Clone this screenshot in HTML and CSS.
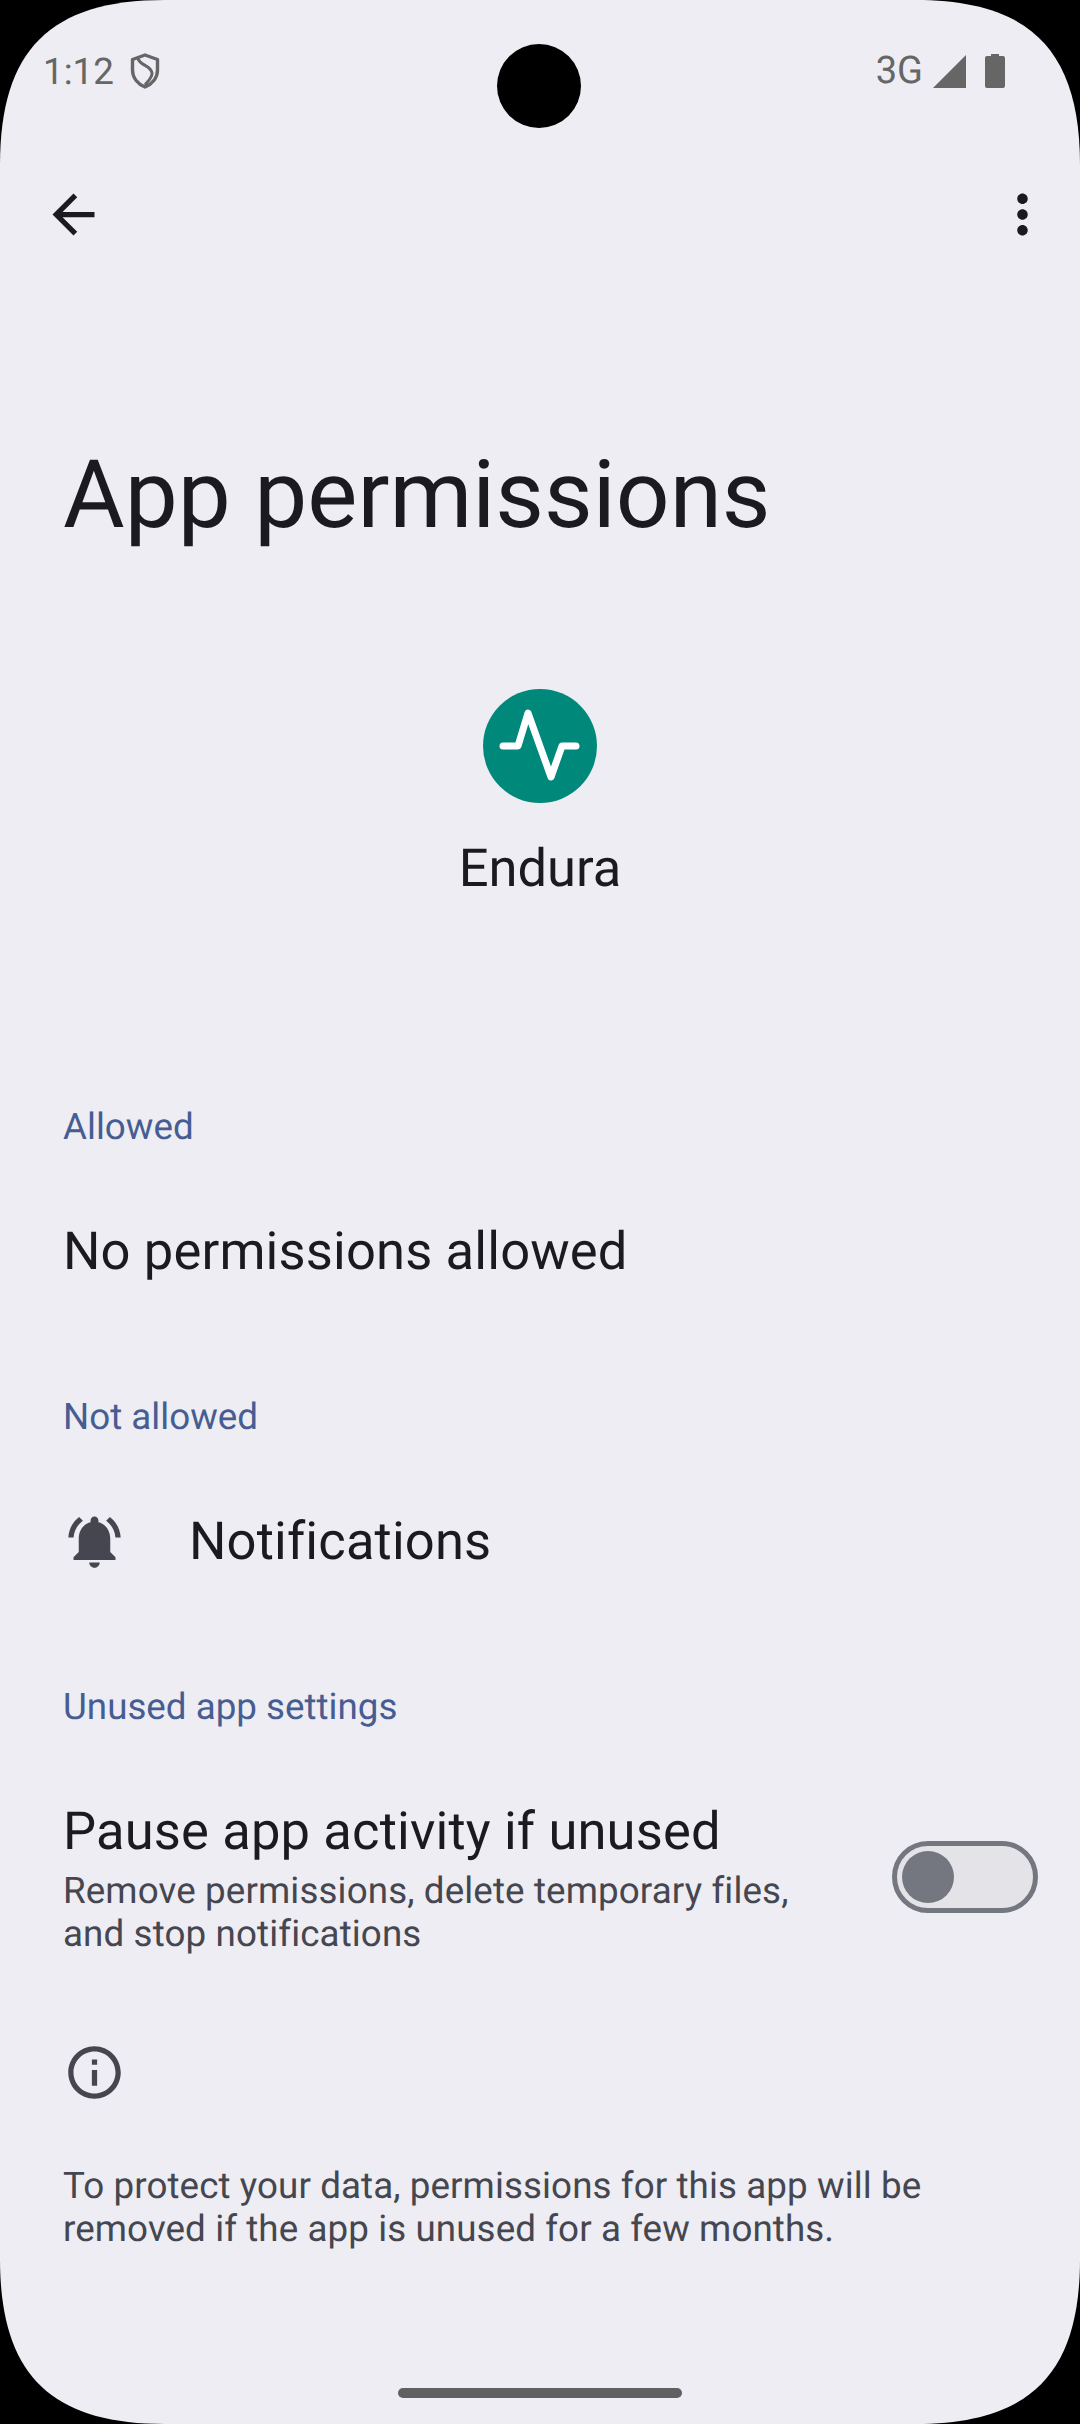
FILE: index.html
```html
<!DOCTYPE html>
<html lang="en">
<head>
  <meta charset="UTF-8" />
  <title>App permissions</title>
  <link rel="stylesheet" href="styles.css">
</head>
<body>
  <div class="screen">
    <div class="status-bar">
      <div class="status-left">
        <span class="clock">1:12</span>
        <svg class="shield" viewBox="0 0 30 36"><path d="M15 2 L27.5 6.5 V17 C27.5 25 22 31 15 34 C8 31 2.5 25 2.5 17 V6.5 Z" fill="none" stroke="#666" stroke-width="3.4" stroke-linejoin="round"/><path d="M8 5.5 C10 13 21 12 22 20 C22.5 24 19 27 15 32" fill="none" stroke="#666" stroke-width="3"/></svg>
      </div>
      <div class="status-right">
        <span class="network">3G</span>
        <svg class="signal" viewBox="0 0 33 33"><path d="M33 0 V33 H0 Z" fill="#666"/></svg>
        <svg class="battery" viewBox="0 0 20 34"><path d="M6 0 H14 V2 H18 Q20 2 20 4 V32 Q20 34 18 34 H2 Q0 34 0 32 V4 Q0 2 2 2 H6 Z" fill="#666"/></svg>
      </div>
    </div>
    <div class="camera"></div>

    <div class="toolbar">
      <svg class="icon" viewBox="0 0 24 24"><path d="M20 11H7.83l5.59-5.59L12 4l-8 8 8 8 1.41-1.41L7.83 13H20v-2z" fill="#1b1b1f"/></svg>
      <svg class="icon" viewBox="0 0 24 24"><path d="M12 8c1.1 0 2-.9 2-2s-.9-2-2-2-2 .9-2 2 .9 2 2 2zm0 2c-1.1 0-2 .9-2 2s.9 2 2 2 2-.9 2-2-.9-2-2-2zm0 6c-1.1 0-2 .9-2 2s.9 2 2 2 2-.9 2-2-.9-2-2-2z" fill="#1b1b1f"/></svg>
    </div>

    <h1 class="page-title">App permissions</h1>

    <div class="app-header">
      <svg class="app-icon" viewBox="0 0 114 114">
        <circle cx="57" cy="57" r="57" fill="#00897b"/>
        <path d="M20 57 H35 L45 24 L68 88 L79 57 H93" fill="none" stroke="#fff" stroke-width="7" stroke-linecap="round" stroke-linejoin="round"/>
      </svg>
      <div class="app-name">Endura</div>
    </div>

    <section class="group group-first">
      <div class="group-label">Allowed</div>
      <div class="row"><span class="row-title">No permissions allowed</span></div>
    </section>

    <section class="group">
      <div class="group-label">Not allowed</div>
      <div class="row">
        <svg class="icon row-icon" viewBox="0 0 24 24"><path d="M7.58 4.08L6.15 2.65C3.75 4.48 2.17 7.3 2.03 10.5h2c.15-2.65 1.51-4.97 3.55-6.42zm12.39 6.42h2c-.15-3.2-1.73-6.02-4.12-7.85l-1.42 1.43c2.02 1.45 3.39 3.77 3.54 6.42zM18 11c0-3.07-1.64-5.64-4.5-6.32V4c0-.83-.67-1.5-1.5-1.5s-1.5.67-1.5 1.5v.68C7.63 5.36 6 7.92 6 11v5l-2 2v1h16v-1l-2-2v-5zm-6 11c.14 0 .27-.01.4-.04.65-.14 1.18-.58 1.44-1.18.1-.24.15-.5.15-.78h-4c.01 1.1.9 2 2.01 2z" fill="#45464f"/></svg>
        <span class="row-title">Notifications</span>
      </div>
    </section>

    <section class="group">
      <div class="group-label">Unused app settings</div>
      <div class="toggle-row">
        <div class="toggle-text">
          <div class="row-title">Pause app activity if unused</div>
          <div class="row-summary">Remove permissions, delete temporary files, and stop notifications</div>
        </div>
        <div class="switch"><div class="switch-thumb"></div></div>
      </div>
    </section>

    <div class="footer-info">
      <svg class="icon" viewBox="0 0 24 24"><path d="M11 7h2v2h-2zm0 4h2v6h-2zm1-9C6.48 2 2 6.48 2 12s4.48 10 10 10 10-4.48 10-10S17.52 2 12 2zm0 18c-4.41 0-8-3.59-8-8s3.59-8 8-8 8 3.59 8 8-3.59 8-8 8z" fill="#45464f"/></svg>
      <p class="footer-text">To protect your data, permissions for this app will be removed if the app is unused for a few months.</p>
    </div>

    <div class="nav-pill"></div>
  </div>
</body>
</html>
```

FILE: styles.css
```css
body {
  margin: 0;
  background: #000;
  font-family: Roboto, sans-serif;
  text-rendering: geometricPrecision;
}
.screen {
  position: relative;
  box-sizing: border-box;
  width: 1080px;
  height: 2424px;
  overflow: hidden;
  background: #ededf3;
  clip-path: path("M0,165 C0,50 50,0 165,0 H915 C1030,0 1080,50 1080,165 V2259 C1080,2374 1030,2424 915,2424 H165 C50,2424 0,2374 0,2259 Z");
  color: #1b1b1f;
}
.status-bar {
  display: flex;
  justify-content: space-between;
  align-items: center;
  height: 36px;
  padding: 53px 75px 0 43px;
  color: #666;
  font-size: 36.75px;
}
.status-left, .status-right {
  display: flex;
  align-items: center;
}
.shield {
  width: 30px;
  height: 36px;
  margin-left: 16px;
}
.network {
  font-size: 38px;
}
.signal {
  width: 33px;
  height: 33px;
  margin-left: 10px;
}
.battery {
  width: 20px;
  height: 34px;
  margin-left: 19px;
}
.camera {
  position: absolute;
  left: 497px;
  top: 44px;
  width: 84px;
  height: 84px;
  border-radius: 50%;
  background: #000;
}
.toolbar {
  display: flex;
  justify-content: space-between;
  padding: 94px 26px 0 42px;
}
.icon {
  display: block;
  width: 63px;
  height: 63px;
  flex-shrink: 0;
}
.page-title {
  margin: 190px 0 0;
  padding-left: 63px;
  font-size: 94.5px;
  font-weight: 400;
  line-height: 120px;
}
.app-header {
  display: flex;
  flex-direction: column;
  align-items: center;
  margin-top: 133px;
}
.app-icon {
  width: 114px;
  height: 114px;
}
.app-name {
  margin-top: 32px;
  font-size: 52.5px;
  line-height: 66px;
}
.group {
  padding: 0 63px;
  margin-top: 108px;
}
.group-first {
  margin-top: 201px;
}
.group-label {
  color: #475d92;
  font-size: 36.75px;
  line-height: 50px;
}
.row {
  display: flex;
  align-items: center;
  height: 66px;
  margin-top: 66px;
}
.row-icon {
  margin-right: 63px;
}
.row-title {
  font-size: 52.5px;
  line-height: 66px;
  letter-spacing: 0.15px;
}
.toggle-row {
  display: flex;
  justify-content: space-between;
  align-items: center;
  margin-top: 66px;
  margin-right: -21px;
}
.toggle-text {
  width: 760px;
}
.row-summary {
  margin-top: 5px;
  color: #45464f;
  font-size: 36.75px;
  line-height: 43px;
  letter-spacing: 0.12px;
}
.switch {
  position: relative;
  box-sizing: border-box;
  width: 146px;
  height: 72px;
  border: 5px solid #74777f;
  border-radius: 36px;
  background: #e4e3e8;
}
.switch-thumb {
  position: absolute;
  left: 5px;
  top: 5px;
  width: 52px;
  height: 52px;
  border-radius: 50%;
  background: #74777f;
}
.footer-info {
  padding: 0 63px;
  margin-top: 86px;
}
.footer-text {
  margin: 60px 0 0;
  color: #45464f;
  font-size: 36.75px;
  line-height: 43px;
  letter-spacing: 0.09px;
}
.nav-pill {
  position: absolute;
  left: 398px;
  top: 2388px;
  width: 284px;
  height: 10px;
  border-radius: 5px;
  background: #606063;
}
```
